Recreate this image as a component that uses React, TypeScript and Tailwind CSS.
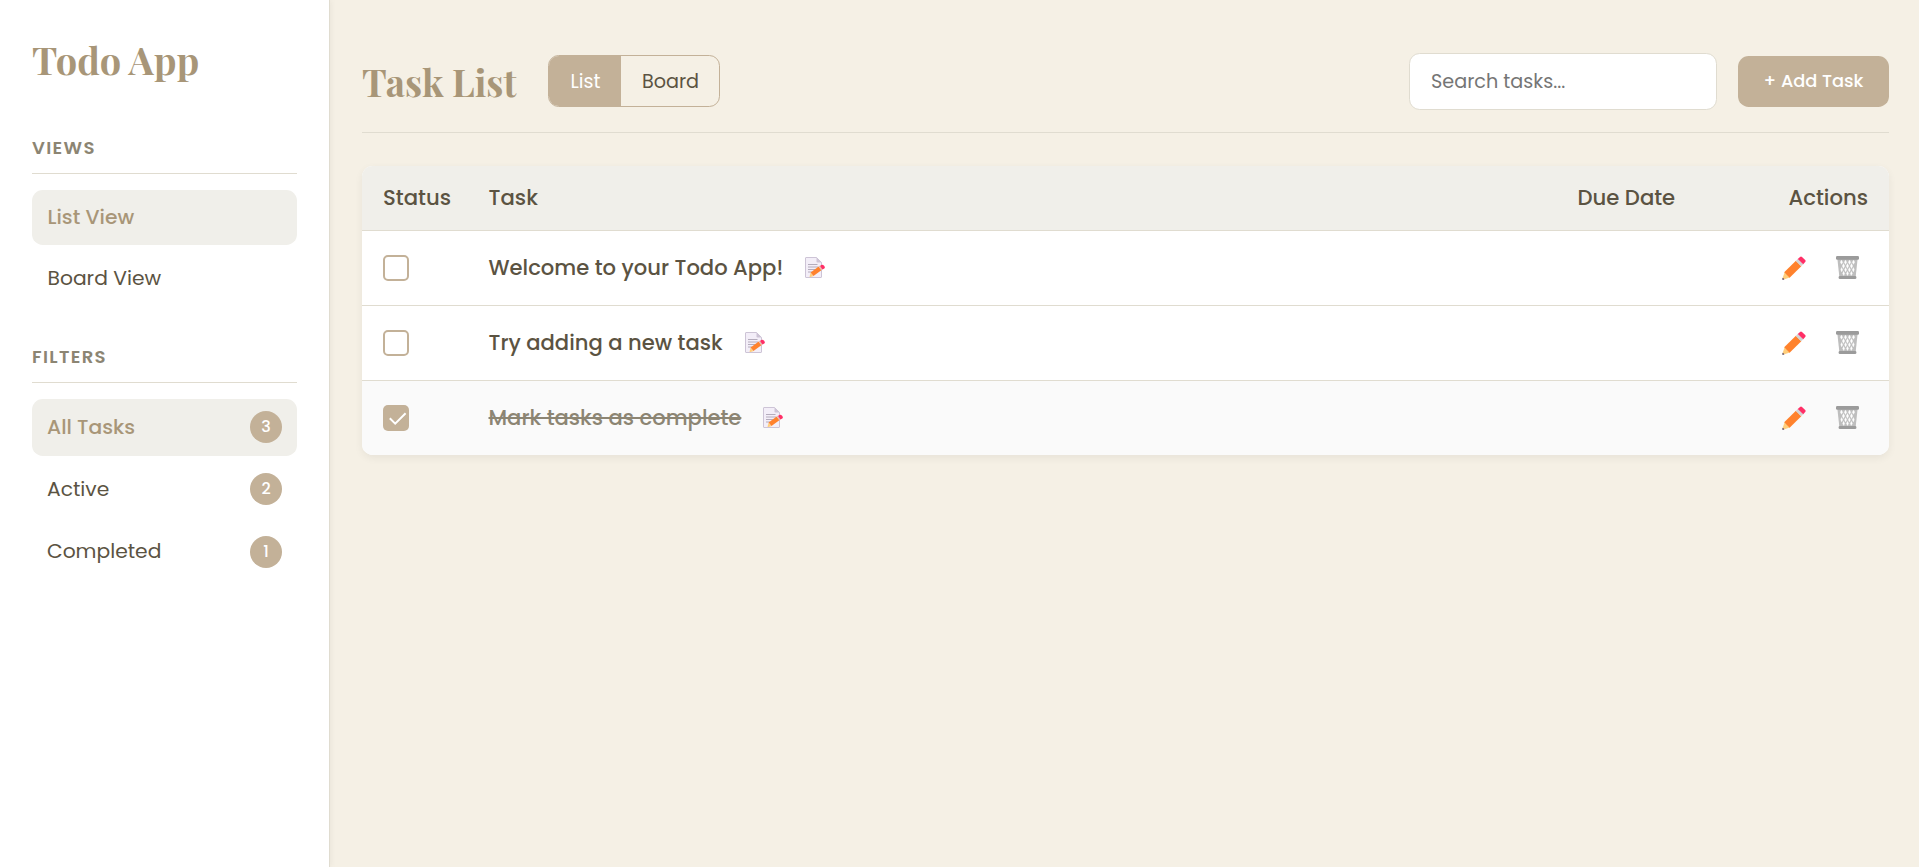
import React from 'react';

type Task = { title: string; done: boolean };

const tasks: Task[] = [
  { title: 'Welcome to your Todo App!', done: false },
  { title: 'Try adding a new task', done: false },
  { title: 'Mark tasks as complete', done: true },
];

const filters = [
  { label: 'All Tasks', count: 3, active: true },
  { label: 'Active', count: 2, active: false },
  { label: 'Completed', count: 1, active: false },
];

function PencilIcon() {
  return (
    <svg width="24" height="24" viewBox="0 0 24 24" aria-label="Edit">
      <path d="M2.6 16.2 7.9 21.5 1.6 23.6Q0.2 24 0.5 22.5Z" fill="#ffce7c" />
      <path d="M.8 21.8 2.4 23.3 1.2 23.8Q0 24 0.3 23Z" fill="#433b6b" />
      <path d="M13.9 4.8 19.3 10.2 7.6 21.7 2.2 16.3Z" fill="#ff822d" />
      <path d="M15.9 2.8 21.3 8.2 19.2 10.3 13.8 4.9Z" fill="#d3d3d3" />
      <path d="M18 .9Q19 0 20 .9L23.2 4.1Q24.1 5.1 23.2 6.1L21.2 8.2 15.8 2.9Z" fill="#ff2f66" />
    </svg>
  );
}

function TrashIcon() {
  return (
    <svg width="23" height="23" viewBox="0 0 23 23" aria-label="Delete">
      <path d="M1.4 3H21.6L19.6 21.5H3.4Z" fill="#bebebe" />
      <g fill="#fff" stroke="#fff" strokeWidth="0.3">
        <path d="M5.4 4 6.7 6.3 5.5 8.3 4.3 6.2ZM9.5 4 10.7 6.3 9.5 8.5 8.3 6.3ZM13.5 4 14.7 6.3 13.5 8.5 12.3 6.3ZM17.6 4 18.7 6.2 17.5 8.3 16.3 6.3Z" />
        <path d="M7.5 7.6 8.7 10 7.5 12.4 6.3 10ZM11.5 7.6 12.7 10 11.5 12.4 10.3 10ZM15.5 7.6 16.7 10 15.5 12.4 14.3 10Z" />
        <path d="M5.6 11.5 6.7 13.8 5.7 15.9 4.7 13.7ZM9.6 11.5 10.7 13.8 9.6 16 8.5 13.8ZM13.4 11.5 14.5 13.8 13.4 16 12.3 13.8ZM17.4 11.5 18.3 13.7 17.3 15.9 16.3 13.8Z" />
        <path d="M7.6 15.3 8.7 17.5 7.8 19.6 6.6 17.5ZM11.5 15.3 12.6 17.5 11.5 19.6 10.4 17.5ZM15.4 15.3 16.4 17.5 15.2 19.6 14.3 17.5Z" />
      </g>
      <rect x="0" y="0" width="23" height="3.8" rx="1.3" fill="#9b9b9b" />
      <rect x="2.6" y="20" width="17.8" height="3" rx="1.3" fill="#9b9b9b" />
    </svg>
  );
}

function NoteIcon() {
  return (
    <svg width="20" height="21" viewBox="0 0 20 21" aria-label="Has notes">
      <path d="M.5 1Q.5.5 1 .5H11.5L16.5 5.5V20Q16.5 20.5 16 20.5H1Q.5 20.5.5 20Z" fill="#f3eef8" stroke="#cdc4d6" />
      <path d="M11.5.3 16.8 5.6H12.3Q11.5 5.6 11.5 4.8Z" fill="#cdc4d6" />
      <path d="M3 7.5H12.5M3 10H13M3 12.5H10M3 15H7" stroke="#b4acbc" />
      <path d="M5.6 15.5 8.3 19.2 5.3 20.1Q4.5 20.2 4.6 19.4Z" fill="#ffce7c" />
      <path d="M13.7 9.4 16.4 13.2 8.4 19.1 5.6 15.4Z" fill="#ff822d" />
      <path d="M15.1 8.6 17.7 12.3 16.3 13.3 13.6 9.5Z" fill="#e8b9b0" />
      <path d="M16.2 8Q17.8 7.2 19.1 8.7 20.5 10.6 19.3 11.6L17.5 12.5 15.1 8.9Z" fill="#ff2f66" />
    </svg>
  );
}

function Checkbox({ checked }: { checked: boolean }) {
  return checked ? (
    <span className="block size-[26px] rounded-[5px] bg-[#c3b198]">
      <svg width="26" height="26" viewBox="0 0 26 26" fill="none" stroke="#fff" strokeWidth="2">
        <path d="M6.8 13.3 12.2 18.7 22.6 8.3" />
      </svg>
    </span>
  ) : (
    <span className="block size-[26px] rounded-[5px] border-2 border-[#c3b198] bg-white" />
  );
}

function SectionTitle({ children }: { children: React.ReactNode }) {
  return (
    <h3 className="border-b border-[#e0dcd0] pb-[11px] text-[18.13px] leading-[29px] font-semibold tracking-[1.33px] text-[#8c8573] uppercase">
      {children}
    </h3>
  );
}

export default function App() {
  return (
    <div className="flex h-[867px] bg-[#f5f0e5] font-[Poppins,Inter,sans-serif] text-[#5b5342]">
      <aside className="z-10 flex w-[330px] shrink-0 flex-col border-r border-[#e0dcd0] bg-white px-8 pt-8 shadow-[1px_0_6px_rgba(0,0,0,0.05)]">
        <h1 className="font-['Playfair_Display','Liberation_Serif',serif] text-[37.9px] leading-[56px] font-bold text-[#a89678]">
          Todo App
        </h1>

        <nav className="mt-[45px]">
          <SectionTitle>Views</SectionTitle>
          <ul className="mt-4 flex flex-col gap-[5.33px] text-[20.27px]">
            <li className="flex h-[55px] items-center rounded-[10.67px] bg-[#f0efea] px-[15.5px] font-medium text-[#a89678]">
              List View
            </li>
            <li className="flex h-[55px] items-center px-[15.5px]">Board View</li>
          </ul>
        </nav>

        <nav className="mt-[36.2px]">
          <SectionTitle>Filters</SectionTitle>
          <ul className="mt-4 flex flex-col gap-[5.33px] text-[20.27px]">
            {filters.map((f) => (
              <li
                key={f.label}
                className={`flex h-[57px] items-center justify-between rounded-[10.67px] px-[15px] ${
                  f.active ? 'bg-[#f0efea] font-medium text-[#a89678]' : ''
                }`}
              >
                {f.label}
                <span className="flex size-8 items-center justify-center rounded-full bg-[#c3b198] text-base font-medium text-white">
                  {f.count}
                </span>
              </li>
            ))}
          </ul>
        </nav>
      </aside>

      <main className="flex flex-1 flex-col pt-[53px] pr-[30px] pl-8">
        <header className="flex items-center border-b border-[#e0dcd0] pb-[22px]">
          <h2 className="font-['Playfair_Display','Liberation_Serif',serif] text-[37px] leading-[57px] font-bold text-[#a89678]">
            Task List
          </h2>
          <div className="mb-px ml-8 flex h-[52px] overflow-hidden rounded-[10.67px] border border-[#c3b198] text-[19.2px]">
            <button className="w-[72px] bg-[#c3b198] pt-0.5 text-white">List</button>
            <button className="w-[98px] pt-0.5">Board</button>
          </div>
          <input
            className="ml-auto h-[57px] w-[308px] rounded-[10.67px] border border-[#e0dcd0] bg-white px-[21px] text-[19.2px] placeholder:text-[#757575]"
            placeholder="Search tasks..."
          />
          <button className="ml-[21px] h-[51px] w-[151px] rounded-[10.67px] bg-[#c3b198] text-[17.78px] font-medium text-white">
            + Add Task
          </button>
        </header>

        <section className="mt-[33px] overflow-hidden rounded-[10.67px] bg-white shadow-[0_3px_8px_rgba(0,0,0,0.06)]">
          <div className="flex h-[65px] items-center border-b border-[#e0dcd0] bg-[#f0efea] px-[21px] text-[21.2px] font-medium">
            <span className="w-[105.5px]">Status</span>
            <span className="flex-1">Task</span>
            <span className="w-[210.5px]">Due Date</span>
            <span className="w-[80px] text-right">Actions</span>
          </div>
          <ul className="divide-y divide-[#e0dcd0]">
            {tasks.map((t) => (
              <li key={t.title} className={t.done ? 'bg-[#fafafa]' : ''}>
                <div className="flex h-[74px] items-center px-[21px]">
                  <div className="w-[105.5px]">
                    <Checkbox checked={t.done} />
                  </div>
                  <div className="flex flex-1 items-center gap-[22px]">
                    <span className={`text-[21.1px] font-medium ${t.done ? 'text-[#8c8573] line-through' : ''}`}>
                      {t.title}
                    </span>
                    <NoteIcon />
                  </div>
                  <div className="flex gap-[30px] pr-[9px]">
                    <PencilIcon />
                    <TrashIcon />
                  </div>
                </div>
              </li>
            ))}
          </ul>
        </section>
      </main>
    </div>
  );
}
